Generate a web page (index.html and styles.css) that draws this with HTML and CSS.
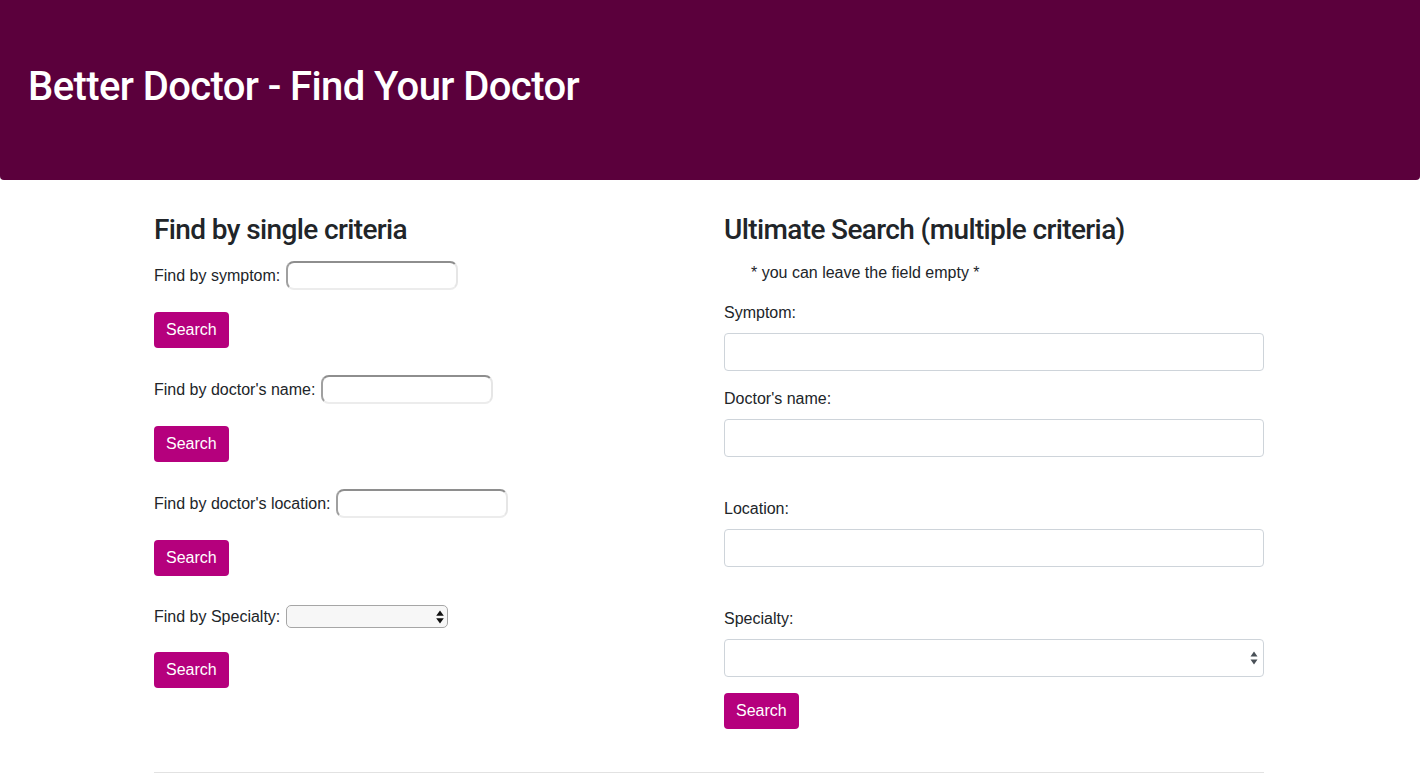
FILE: index.html
```html
<!DOCTYPE html>
<html lang="en">
<head>
<meta charset="utf-8">
<title>Better Doctor</title>
<link rel="stylesheet" href="styles.css">
</head>
<body>
<header class="hero">
  <h1 class="hero-title">Better Doctor - Find Your Doctor</h1>
</header>
<main class="container">
  <div class="cols">
    <section class="col">
      <h3 class="section-title">Find by single criteria</h3>
      <div class="single">
        <div class="single-row"><label class="inline-label">Find by symptom:</label><input class="mini-input" type="text"></div>
        <button class="btn">Search</button>
      </div>
      <div class="single">
        <div class="single-row"><label class="inline-label">Find by doctor's name:</label><input class="mini-input" type="text"></div>
        <button class="btn">Search</button>
      </div>
      <div class="single single-before-select">
        <div class="single-row"><label class="inline-label">Find by doctor's location:</label><input class="mini-input" type="text"></div>
        <button class="btn">Search</button>
      </div>
      <div class="single">
        <div class="single-row single-row-select"><label class="inline-label">Find by Specialty:</label>
          <span class="mini-select-wrap"><select class="mini-select"><option></option></select>
            <svg class="mini-arrows" width="8" height="14" viewBox="0 0 8 14"><path d="M4 0.5 L7.8 5.8 H0.2 Z M4 13.5 L7.8 8.2 H0.2 Z" fill="#111"/></svg>
          </span>
        </div>
        <button class="btn">Search</button>
      </div>
    </section>
    <section class="col">
      <h3 class="section-title">Ultimate Search (multiple criteria)</h3>
      <p class="note">* you can leave the field empty *</p>
      <div class="group">
        <label class="field-label">Symptom:</label>
        <input class="field" type="text">
      </div>
      <div class="group">
        <label class="field-label">Doctor's name:</label>
        <input class="field" type="text">
      </div>
      <div class="group group-wide">
        <label class="field-label">Location:</label>
        <input class="field" type="text">
      </div>
      <div class="group group-wide">
        <label class="field-label">Specialty:</label>
        <span class="field-select-wrap"><select class="field field-select"><option></option></select>
          <svg class="field-arrows" width="8" height="14" viewBox="0 0 8 14"><path d="M4 0.5 L7.5 5.5 H0.5 Z M4 13.5 L7.5 8.5 H0.5 Z" fill="#495057"/></svg>
        </span>
      </div>
      <button class="btn">Search</button>
    </section>
  </div>
  <hr class="rule">
</main>
</body>
</html>
```

FILE: styles.css
```css
* { box-sizing: border-box; }
html, body { margin: 0; padding: 0; }
body {
  font-family: "Liberation Sans", Arial, sans-serif;
  font-size: 16px;
  line-height: 24px;
  color: #212529;
  background: #fff;
}
.hero {
  height: 180px;
  background: #5b003c;
  padding: 63px 28px 0;
  border-radius: 0 0 4px 4px;
}
.hero-title {
  margin: 0;
  color: #fff;
  font-family: Roboto, "Liberation Sans", sans-serif;
  font-size: 40px;
  line-height: 48px;
  font-weight: 500;
  letter-spacing: -0.6px;
}
.container {
  width: 1140px;
  margin: 0 auto;
  padding: 31px 15px 0;
  position: relative;
  left: -1px;
}
.cols {
  display: grid;
  grid-template-columns: 540px 540px;
  column-gap: 30px;
}
.section-title {
  margin: 0 0 12px;
  font-family: Roboto, "Liberation Sans", sans-serif;
  font-size: 28px;
  line-height: 38px;
  font-weight: 500;
  letter-spacing: -0.62px;
}
.single { margin-bottom: 27px; }
.single-before-select { margin-bottom: 29px; }
.single-row {
  display: flex;
  align-items: center;
  gap: 6px;
  height: 29px;
  margin-bottom: 22px;
}
.single-row-select { height: 23px; margin-bottom: 24px; }
.inline-label { white-space: nowrap; }
.mini-input {
  width: 172px;
  height: 29px;
  border: 2px solid;
  border-color: #8e8e8e #e6e6e6 #ececec #a0a0a0;
  border-radius: 8px;
  background: #fff;
  padding: 0 6px;
  font: inherit;
}
.mini-select-wrap { position: relative; display: inline-block; height: 23px; }
.mini-select {
  -webkit-appearance: none;
  appearance: none;
  width: 162px;
  height: 23px;
  border: 1px solid #a6a6a6;
  border-radius: 5px;
  background: #f7f7f7;
  font: inherit;
  font-size: 13px;
  padding: 0 6px;
  display: block;
}
.mini-arrows { position: absolute; right: 4px; top: 5px; }
.btn {
  display: block;
  height: 36px;
  padding: 0 12px;
  border: 0;
  border-radius: 4px;
  background: #b5007d;
  color: #fff;
  font: inherit;
  font-size: 16px;
  line-height: 36px;
}
.note {
  margin: 0 0 16px;
  padding-left: 27px;
}
.group { margin-bottom: 16px; }
.group-wide { margin-top: 40px; }
.field-label {
  display: block;
  margin-bottom: 8px;
}
.field {
  display: block;
  width: 540px;
  height: 38px;
  border: 1px solid #ced4da;
  border-radius: 4px;
  background: #fff;
  padding: 6px 12px;
  font: inherit;
}
.field-select-wrap { position: relative; display: block; }
.field-select { -webkit-appearance: none; appearance: none; }
.field-arrows { position: absolute; right: 6px; top: 12px; }
.rule {
  margin: 43px 0 0;
  border: 0;
  border-top: 1px solid #e2e2e2;
}
```
